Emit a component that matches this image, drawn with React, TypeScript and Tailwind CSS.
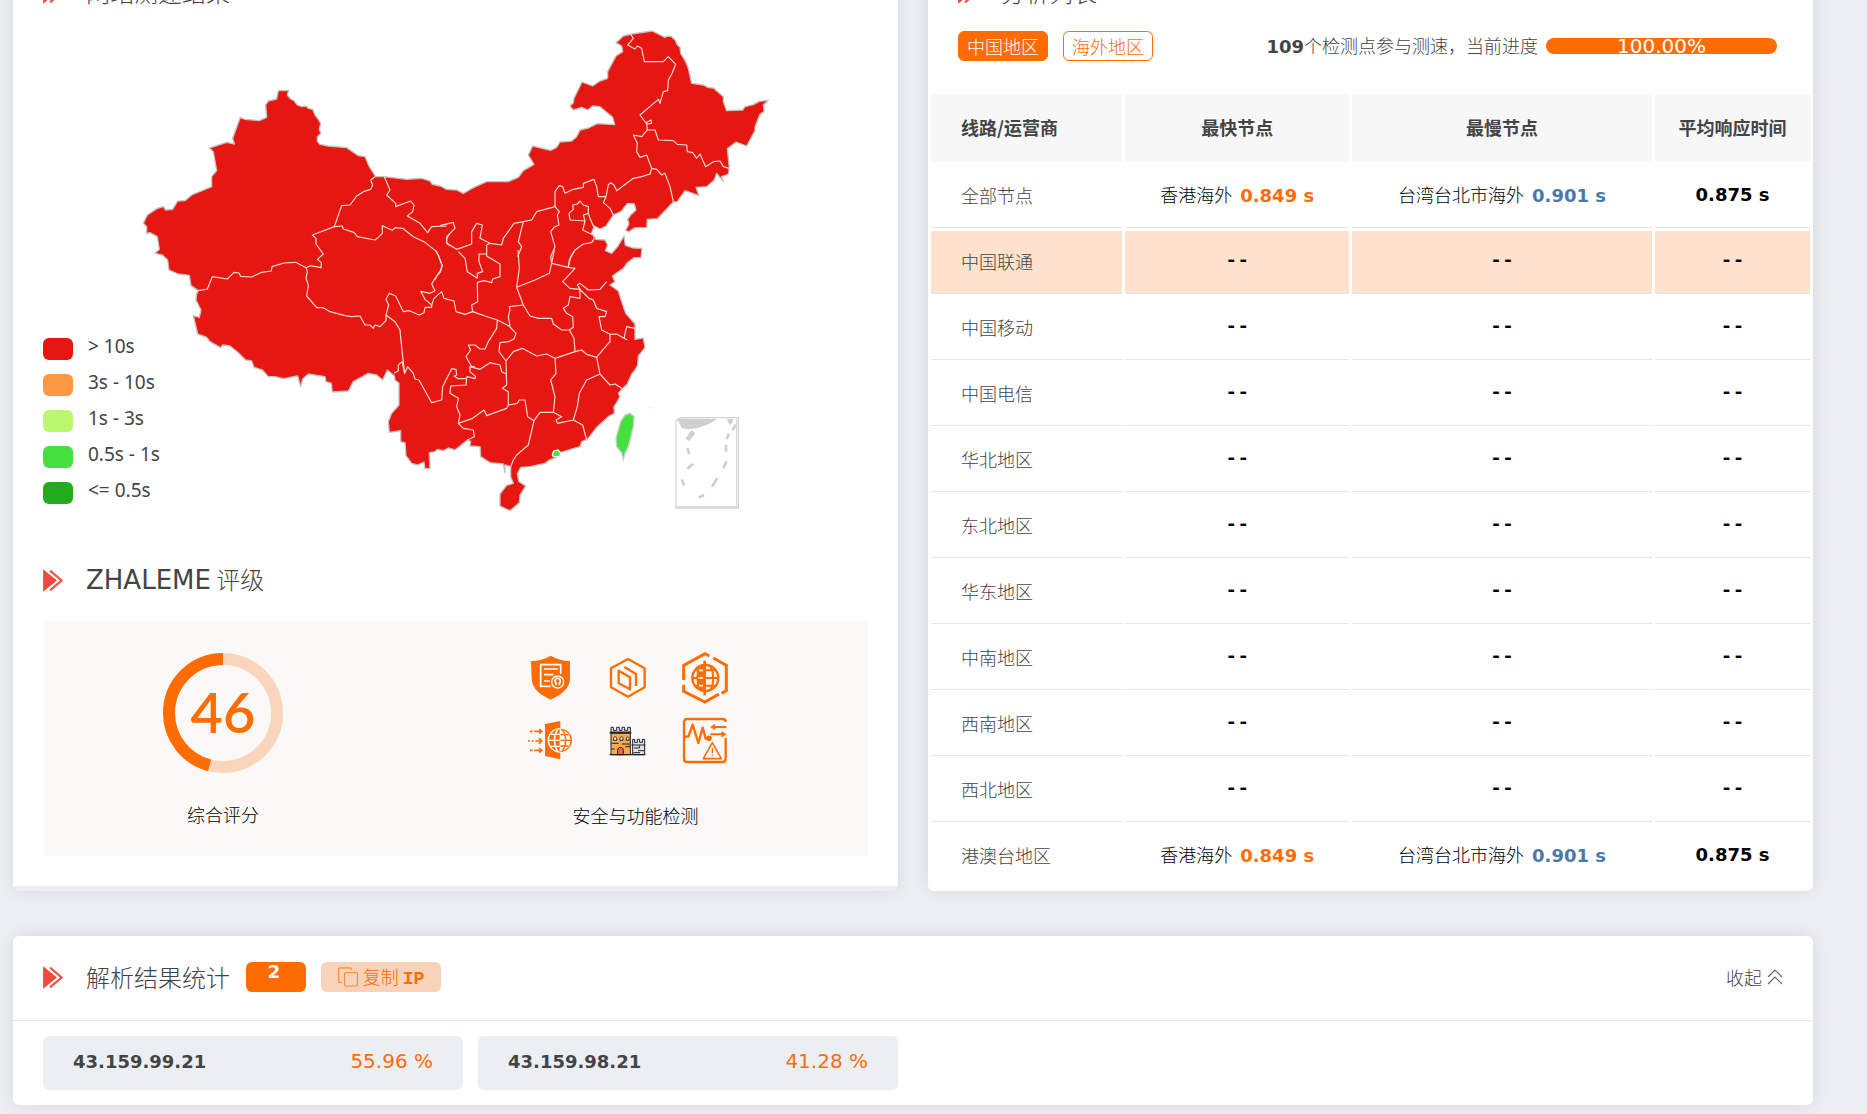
import type { ReactNode } from "react";

type SpeedNode = { name: string; time: string };

type LineRow = {
  line: string;
  fastest?: SpeedNode;
  slowest?: SpeedNode;
  average?: string;
  highlight?: boolean;
};

const offshore = {
  fastest: { name: "香港海外", time: "0.849" },
  slowest: { name: "台湾台北市海外", time: "0.901" },
  average: "0.875",
};

const rows: LineRow[] = [
  { line: "全部节点", ...offshore },
  { line: "中国联通", highlight: true },
  { line: "中国移动" },
  { line: "中国电信" },
  { line: "华北地区" },
  { line: "东北地区" },
  { line: "华东地区" },
  { line: "中南地区" },
  { line: "西南地区" },
  { line: "西北地区" },
  { line: "港澳台地区", ...offshore },
];

const legend = [
  { label: "> 10s", color: "bg-[#e61610]" },
  { label: "3s - 10s", color: "bg-[#ff9743]" },
  { label: "1s - 3s", color: "bg-[#bbf76c]" },
  { label: "0.5s - 1s", color: "bg-[#44e040]" },
  { label: "<= 0.5s", color: "bg-[#23ab1e]" },
];

const resolved = [
  { ip: "43.159.99.21", share: "55.96 %" },
  { ip: "43.159.98.21", share: "41.28 %" },
];

const num = "font-['DejaVu_Sans','Noto_Sans_CJK_SC',sans-serif] text-[20px] font-normal";
const numBold = "font-['DejaVu_Sans','Noto_Sans_CJK_SC',sans-serif] text-lg font-bold";
const dashes = "font-['Liberation_Mono',monospace] text-[20px] font-bold";

function SectionTitle({ children }: { children: ReactNode }) {
  return (
    <div className="flex h-9 items-center">
      <svg viewBox="0 0 60 70" className="mr-[23px] h-[23px] w-5 shrink-0" aria-hidden="true">
        <path d="M0 1 42 35 0 69Z" fill="#f0483e" />
        <path d="M21 5 56 35 21 65" fill="none" stroke="#ee554d" strokeWidth="7" />
      </svg>
      <h2 className="text-2xl font-light whitespace-nowrap">{children}</h2>
    </div>
  );
}

function ChinaMap() {
  return (
    <svg viewBox="129 60 2250 1500" className="h-[500px] w-[750px]" role="img" aria-label="中国">
      <path
        fill="#e61610"
        stroke="#c9c0c0"
        strokeWidth="4"
        strokeLinejoin="round"
        d="M835 272 866 272 862 285 872 297 882 302 892 315 905 320 918 318 925 325 938 328 945 345 955 358 962 370 958 388 963 400 952 410 952 424 960 433 985 438 1040 443 1075 467 1095 470 1108 500 1127 530 1152 530 1220 538 1265 535 1290 543 1297 553 1320 558 1340 568 1370 570 1390 580 1420 563 1460 545 1525 545 1555 532 1570 512 1602 493 1585 465 1598 438 1652 451 1670 442 1680 426 1715 423 1730 410 1740 390 1765 384 1792 371 1844 374 1838 352 1800 320 1778 318 1763 330 1745 322 1720 330 1710 318 1720 308 1722 295 1746 246 1778 258 1800 243 1823 235 1823 215 1848 168 1868 155 1865 138 1848 128 1870 108 1895 102 1957 93 1995 112 2002 108 2015 110 2025 120 2032 135 2040 142 2042 160 2057 185 2065 205 2070 228 2075 250 2110 255 2125 263 2140 264 2170 290 2170 305 2180 332 2228 330 2235 320 2260 314 2278 304 2305 301 2290 315 2292 335 2280 343 2265 380 2265 392 2240 438 2208 426 2182 446 2188 504 2185 522 2165 530 2170 544 2150 520 2143 540 2120 560 2088 562 2097 587 2055 572 2032 605 2020 606 1972 656 1942 658 1940 682 1905 683 1885 696 1877 690 1887 672 1883 658 1892 645 1908 630 1903 612 1882 610 1865 633 1840 645 1830 660 1818 678 1800 687 1783 678 1775 700 1788 718 1815 720 1823 735 1816 752 1835 760 1853 740 1872 708 1876 736 1900 744 1926 745 1923 773 1903 773 1882 788 1870 805 1837 828 1845 845 1830 855 1855 873 1865 905 1877 940 1905 972 1905 1018 1930 1014 1935 1042 1915 1068 1913 1095 1905 1110 1895 1122 1882 1152 1865 1168 1855 1180 1860 1190 1852 1205 1842 1220 1843 1240 1825 1250 1790 1282 1762 1318 1745 1325 1740 1340 1712 1348 1680 1358 1670 1372 1648 1380 1635 1390 1590 1400 1562 1402 1552 1422 1557 1445 1577 1458 1560 1485 1558 1508 1530 1532 1500 1518 1500 1482 1520 1456 1540 1450 1532 1430 1532 1400 1515 1395 1515 1418 1510 1392 1470 1388 1442 1370 1440 1340 1410 1338 1412 1324 1402 1320 1380 1338 1365 1350 1345 1344 1330 1352 1312 1348 1305 1355 1288 1358 1290 1406 1275 1406 1272 1386 1252 1395 1235 1390 1218 1367 1215 1328 1202 1325 1202 1292 1168 1297 1165 1265 1175 1240 1197 1215 1197 1150 1185 1140 1183 1127 1162 1110 1148 1140 1130 1125 1105 1120 1060 1145 1045 1173 997 1176 994 1150 978 1145 975 1130 925 1122 908 1137 902 1160 893 1128 850 1136 825 1130 805 1130 787 1110 762 1102 755 1083 737 1080 715 1058 690 1038 668 1035 662 1043 630 1025 620 1012 593 1002 580 947 598 952 603 930 588 900 590 882 595 872 573 857 568 826 535 822 507 810 503 780 487 765 465 760 478 748 472 710 450 698 440 700 440 680 430 670 442 645 472 625 490 620 497 630 518 628 533 603 555 602 575 585 635 560 635 530 650 512 640 455 628 444 680 427 703 432 698 415 721 352 735 358 778 362 800 352 797 315 805 303 830 297Z"
      />
      <g fill="none" stroke="#ffdcda" strokeWidth="3.5" strokeLinejoin="round">
        {/* north-west */}
        <g transform="translate(390 240)">
          <path d="M735 290 722 300 728 315 722 328 700 335 680 348 660 375 635 377 613 440 547 465 558 475 558 492 580 522 562 538 574 548 573 563 540 557 528 563" />
          <path d="M205 632 232 627 247 590 292 597 312 577 327 579 332 589 365 591 395 577 424 573 426 560 462 549 497 547 528 563 532 575 528 595 535 615 530 648 560 683 580 683 600 695 645 707 665 710 690 708 705 735 720 735 730 745 735 735 750 740 768 722 768 705" />
          <path d="M613 440 637 438 640 447 672 457 682 470 735 480 745 472 757 460 757 437 787 451 795 443 818 445 850 470 885 487 920 515 936 555 932 570 920 588 915 600" />
          <path d="M763 290 780 330 770 345 797 370 797 380 842 363 852 375 848 395 832 408 870 430 893 458 905 440 950 438" />
          <path d="M960 460 950 475 950 490 962 498" />
        </g>
        {/* north-east */}
        <g transform="translate(1320 60)">
          <path d="M572 42 580 55 563 75 585 87 592 78 605 85 613 125 670 125 685 110 707 133 697 158 685 180 683 212 670 215 660 250 655 238 600 285 620 312 635 310 633 300 620 307 622 330 645 330 655 360 700 362 712 373 740 375 742 395 758 398 770 415 780 402 797 440 820 425 840 423 850 440 868 445" />
          <path d="M622 330 605 350 580 345 592 370 590 395 600 412 620 405 635 445 650 448 665 465 675 460 690 500 700 545M635 445 630 462 605 470 580 475 530 512 522 495 512 488 505 495 498 530 490 548 510 565 520 585" />
          <path d="M498 530 475 530 470 500 462 478 430 490 430 502 400 508 375 520 368 500 358 497 345 515 345 560 290 575 275 600 250 605 222 610 190 655 185 675 150 670 120 655 127 615 110 610 95 635 95 672 50 688 20 670 20 650 45 625 40 607 0 617" />
          <path d="M345 560 358 575 352 585 357 615 342 622 332 635 345 680 332 710 335 730M250 605 235 665 245 680 233 710M385 740 388 720 405 690 430 672 455 668 463 655M140 690 140 675 150 670" />
          <path d="M420 543 412 552 398 555 400 568 387 580 390 600 435 603 428 630 455 643 463 625 450 595 445 580 430 585 435 603M445 580 445 560 430 555 420 543" />
        </g>
        {/* centre and south */}
        <g transform="translate(1140 750)">
          <path d="M165 0 175 15 187 47 182 65 165 85 155 102 165 122 150 130 122 124 135 148 155 165 155 172 135 172 132 188 118 195 88 182 70 185 47 138 28 130 18 148 26 165 18 195 45 215 60 240 62 262 68 320 74 370 83 350 100 370 105 387 117 390 155 458 185 450 188 410 215 356 228 358 230 375 222 378 235 386 258 386 262 380 285 386 287 380 270 365 270 350 300 358 330 338 360 345 365 365 378 372" />
          <path d="M74 370 66 335 55 345 55 362 42 370M155 165 162 145 185 125 192 145 222 153 228 185 255 193 278 185 315 198 352 210 387 228 408 250 402 267 385 275 360 278 357 305 378 333 380 405 367 415 385 425 385 465 412 460 418 450 435 450 443 500 462 512" />
          <path d="M278 185 275 165 293 155 292 97 312 92 335 98 338 87 360 80 360 42 320 18 320 0M320 12 297 12 297 35 308 65 292 70 292 85 262 65 255 25 235 5" />
          <path d="M352 210 350 235 325 275 315 297 300 297 285 285 265 285 272 300 258 320 275 350 285 350M260 386 258 405 212 408 210 430 235 445 230 470 240 495 235 520 278 505 312 480 320 497 380 475 385 465M235 520 250 535 280 540 283 560 262 570" />
          <path d="M414 0 418 55 410 112 430 165 388 170 390 180 385 200 390 228M410 112 465 90 508 70 515 40 565 52 585 55 548 95 570 115 600 118 627 145 640 150 650 175 680 185 675 200 657 200 665 240 690 253 710 252 732 265 740 230 765 235M732 265 742 270M515 40 523 0M565 52 572 20 585 0" />
          <path d="M430 165 450 198 475 205 515 205 520 222 545 240 568 240 582 265 585 305 525 325 500 312 470 318 427 295 400 305 378 333M568 240 580 232 578 200 560 190 550 175 565 165 570 140 600 145 600 118 592 105 600 100 625 120 660 118 680 95" />
          <path d="M585 305 605 300 620 313 650 322 672 295 690 275 690 253M650 322 660 372 690 405 705 402 725 415M660 372 620 390 598 430 592 470 580 510 532 520 528 510 545 500 520 487 480 487 462 512 445 585 410 615 400 630 392 650M525 325 528 370 512 390 525 440 520 487M580 510 608 525 620 570" />
        </g>
      </g>
      <g transform="translate(1140 750)">
        <path d="M750 490 762 500 760 530 745 590 735 610 730 628 725 608 710 590 708 565 722 515 735 495Z" fill="#44e040" stroke="#c9cfc9" strokeWidth="4" />
        <path d="M517 614 521 603 534 600 543 610 538 620 520 620Z" fill="#44e040" stroke="#fff" strokeWidth="4" />
        <circle cx="811" cy="473" r="2" fill="#ccc" />
        <path d="M888 774V512L902 503H1075V774Z" fill="none" stroke="#d2d4d6" strokeWidth="4" />
        <path d="M893 770H1070V506" fill="none" stroke="#d2d4d6" strokeWidth="3" />
        <path d="M892 506H1012C985 526 958 534 925 538L905 534Z" fill="#cfcfd2" />
        <path d="M1040 506H1058V518L1049 526Z" fill="#cfcfd2" />
        <g stroke="#cfcfd2" strokeWidth="8" fill="none">
          <path d="M922 570 940 545" strokeWidth="14" />
          <path d="M1067 524 1058 541M1047 552 1040 567M1038 585V605M1040 634 1030 654M1012 684 996 710M972 735 956 743M906 688 912 706M922 656 940 641M922 594 928 612" />
        </g>
      </g>
    </svg>
  );
}

function ScoreRing({ score }: { score: number }) {
  return (
    <svg viewBox="0 0 120 120" className="size-[120px]" role="img" aria-label={`综合评分 ${score}`}>
      <circle cx="60" cy="60" r="54" fill="none" stroke="#f9d6bb" strokeWidth="12" />
      <circle
        cx="60"
        cy="60"
        r="54"
        fill="none"
        stroke="#ff6c02"
        strokeWidth="12"
        pathLength="100"
        strokeDasharray={`${score} ${100 - score}`}
        strokeDashoffset={score - 100}
        transform="rotate(-90 60 60)"
      />
      <text x="60" y="80" textAnchor="middle" fill="#ff6c02" className="font-['Lato',sans-serif] text-[56px] font-semibold">
        {score}
      </text>
    </svg>
  );
}

const iconSize = "h-[54px] w-[52px]";

function CheckIcons() {
  return (
    <div className="mr-4 grid grid-cols-3 gap-x-[25px] gap-y-[9px]">
      {/* certificate shield */}
      <svg viewBox="75 63 156 162" className={iconSize} fill="none" stroke="#ff6c02">
        <path d="M152 77C170 88 190 92 210 93V145C210 176 182 196 152 209C122 196 95 176 95 145L93 93C115 92 135 88 152 77Z" fill="#ff6c02" stroke="none" />
        <path d="M182 132V104H122V169H152" stroke="#fff" strokeWidth="5" />
        <path d="M132 117H173M132 134H160M132 153H150" stroke="#fff" strokeWidth="5" />
        <circle cx="173" cy="156" r="18" fill="#ff6c02" stroke="#fff" strokeWidth="4" />
        <path d="M168 166V159A8 8 0 1 1 178 159V166" stroke="#fff" strokeWidth="5" />
      </svg>
      {/* hexagon box */}
      <svg viewBox="306 63 156 162" className={iconSize} fill="none" stroke="#ff6c02" strokeWidth="7" strokeLinejoin="round">
        <path d="M384 87 434 115V172L384 200 333 172V115Z" />
        <path d="M356 122 390 142V178L356 160Z" />
        <path d="M373 111 408 132V168" />
      </svg>
      {/* globe in hexagon */}
      <svg viewBox="540 63 156 162" className={iconSize} fill="none" stroke="#ff6c02" strokeWidth="9">
        <path d="M631 78 618 71 554 106V150M554 164V184L618 216 660 192M643 84 682 106V182L668 190" />
        <circle cx="619" cy="144" r="39" strokeWidth="7" />
        <path d="M617 92V196" strokeWidth="8" />
        <path d="M581 144H657M586 121H652M586 167H652" strokeWidth="6" />
        <path d="M604 108C592 132 592 157 604 181M634 108C646 132 646 157 634 181" strokeWidth="6" />
        <path d="M617 104V184L604 181C592 157 592 132 604 108Z" fill="#ff6c02" stroke="none" />
        <path d="M600 121H612M598 144H612M600 167H612" stroke="#fff" strokeWidth="5" />
      </svg>
      {/* traffic into globe */}
      <svg viewBox="75 252 156 162" className={iconSize} fill="none" stroke="#ff6c02" strokeWidth="4">
        <path d="M135 282 181 273V388L135 378Z" fill="#ff6c02" stroke="none" />
        <circle cx="180" cy="331" r="35" fill="#ff6c02" stroke="#fff" />
        <path d="M181 298A33 33 0 0 1 181 364Z" fill="#fbf9f8" />
        <path d="M147 331H213M153 313H208M153 349H208M181 298V364" stroke="#fff" />
        <path d="M173 298C160 318 160 344 173 364" stroke="#fff" />
        <path d="M181 331H213M181 314H206M181 348H206M188 300C200 318 200 344 188 362" />
        <path d="M90 304H98M103 304H124M118 297 125 304 118 311M84 333H90M95 333H101M106 333H124M117 324 125 333 117 342M90 361H98M103 361H124M118 354 125 361 118 368" strokeWidth="5" />
      </svg>
      {/* castle */}
      <svg viewBox="306 252 156 162" className={iconSize} fill="none" stroke="#20202a" strokeWidth="3">
        <path d="M333 306H391V374H333Z" fill="#fba94c" />
        <path d="M333 306V292H340V301H350V292H358V301H366V292H374V301H383V292H391V306Z" fill="#e8e8ec" />
        <path d="M329 309H394" strokeWidth="5" />
        <path d="M398 341V328H404V337H412V328H419V337H427V328H434V374H398Z" fill="#dedfe8" />
        <path d="M394 345H436M402 354H418V347M414 362H434M400 368H420" />
        <path d="M341 331V325C341 319 350 319 350 325V331ZM360 331V325C360 319 369 319 369 325V331ZM379 331V325C379 319 387 319 387 325V331Z" fill="#fff" />
        <path d="M334 340H356M366 342H390M376 350H390M335 357H344" />
        <path d="M353 374V361C353 349 370 349 370 361V374Z" fill="#f46a3c" />
        <path d="M329 374H436" strokeWidth="4" />
      </svg>
      {/* abnormal traffic */}
      <svg viewBox="540 252 156 162" className={iconSize} fill="none" stroke="#ff6c02" strokeWidth="7" strokeLinejoin="round">
        <path d="M680 276C680 270 676 267 670 267H565C559 267 555 271 555 277V386C555 392 559 396 565 396H670C676 396 680 392 680 386V324" />
        <path d="M557 320H568L581 284 598 339 611 293 620 326 628 324" />
        <circle cx="630" cy="325" r="5" fill="#ff6c02" />
        <path d="M682 291H642M634 313H674" strokeWidth="6" />
        <path d="M648 282 634 291 648 300ZM668 304 682 313 668 322Z" fill="#ff6c02" strokeWidth="1" />
        <path d="M640 338 667 386H613Z" strokeWidth="5" />
        <path d="M640 353V370M640 374V379" strokeWidth="4" />
      </svg>
    </div>
  );
}

function NodeCell({ node, color }: { node?: SpeedNode; color: string }) {
  if (!node) return <span className={dashes}>--</span>;
  return (
    <>
      {node.name}
      <span className={`ml-2 ${numBold} ${color}`}>{node.time} s</span>
    </>
  );
}

export default function App() {
  const shadow = "shadow-[0_0_18px_rgba(0,0,0,0.09)]";

  return (
    <div className="min-h-screen overflow-hidden bg-[#ebeef3] font-['Noto_Sans_CJK_SC',sans-serif] text-lg font-light text-[#444]">
      <main className="-mt-10 mr-[54px] mb-2 ml-[13px] flex flex-col gap-[45px]">
        <div className="grid grid-cols-2 gap-[30px]">
          <div className={`rounded-md bg-[#ebeef3] ${shadow}`}>
            <section className="bg-white px-[30px] pt-[14px] pb-[30px]">
              <SectionTitle>网站测速结果</SectionTitle>

              <div className="relative mt-[10px]">
                <ChinaMap />
                <ul className="absolute bottom-[15px] left-0 flex flex-col gap-3 font-['Noto_Sans',sans-serif] text-[19px] font-normal">
                  {legend.map((item) => (
                    <li key={item.label} className="flex h-6 items-center gap-[15px]">
                      <span className={`h-[22px] w-[30px] rounded-md ${item.color}`} />
                      <span className="-mt-1">{item.label}</span>
                    </li>
                  ))}
                </ul>
              </div>

              <div className="mt-[42px]">
                <SectionTitle>
                  <span className="font-['DejaVu_Sans',sans-serif] text-[26px] font-normal">ZHALEME</span> 评级
                </SectionTitle>
              </div>

              <div className="mt-[23px] grid grid-cols-[24fr_31fr] bg-[#fbf9f8] pt-[30px] pb-[27px] text-black">
                <div className="flex flex-col items-center pt-[2px]">
                  <ScoreRing score={46} />
                  <p className="mt-[27px]">综合评分</p>
                </div>
                <div className="flex flex-col items-center">
                  <CheckIcons />
                  <p className="mt-[33px]">安全与功能检测</p>
                </div>
              </div>
            </section>
          </div>

          <section className={`rounded-md bg-white pt-[14px] ${shadow}`}>
            <div className="px-[30px]">
              <SectionTitle>分析列表</SectionTitle>
            </div>

            <div className="mt-[21px] mb-[30px] flex h-[30px] items-center justify-between pr-9 pl-[30px]">
              <div className="flex gap-[15px]">
                <button type="button" className="h-[30px] rounded-md border border-[#ff6c02] bg-[#ff6c02] px-2 leading-7 text-white">
                  中国地区
                </button>
                <button type="button" className="h-[30px] rounded-md border border-[#ff6c02] px-2 leading-7 text-[#ff6c02]">
                  海外地区
                </button>
              </div>
              <div className="flex items-center gap-2">
                <span className="whitespace-nowrap">
                  <span className={numBold}>109</span>个检测点参与测速，当前进度
                </span>
                <div className="h-4 w-[231px] rounded-full bg-[#ff6c02] text-center text-white">
                  <span className={`block leading-4 ${num}`}>100.00%</span>
                </div>
              </div>
            </div>

            <table className="w-full table-fixed border-separate border-spacing-[3px] text-center text-black">
              <colgroup>
                <col className="w-[22%]" />
                <col className="w-[25.7%]" />
                <col className="w-[34.5%]" />
                <col />
              </colgroup>
              <thead>
                <tr className="h-[68px] text-[#444] *:bg-[#f7f7f7] *:pb-[3px]">
                  <th className="pl-[30px] text-left">线路/运营商</th>
                  <th>最快节点</th>
                  <th>最慢节点</th>
                  <th>平均响应时间</th>
                </tr>
              </thead>
              <tbody>
                {rows.map((row) => (
                  <tr
                    key={row.line}
                    className={`h-[63px] *:border-b *:border-[#e6e6e6] *:pb-[3px] last:*:border-transparent ${
                      row.highlight ? "*:bg-[#fee2ce]" : ""
                    }`}
                  >
                    <td className="pl-[30px] text-left text-[#444]">{row.line}</td>
                    <td>
                      <NodeCell node={row.fastest} color="text-[#ff6c02]" />
                    </td>
                    <td>
                      <NodeCell node={row.slowest} color="text-[#4a78ae]" />
                    </td>
                    <td className={row.average ? numBold : dashes}>{row.average ? `${row.average} s` : "--"}</td>
                  </tr>
                ))}
              </tbody>
            </table>
          </section>
        </div>

        <section className={`rounded-md bg-white ${shadow}`}>
          <header className="flex h-[85px] items-center border-b border-[#e6e6e6] px-[30px] pb-[2px]">
            <SectionTitle>解析结果统计</SectionTitle>
            <span className={`ml-4 h-[30px] w-[60px] rounded-md bg-[#ff6c02] pr-1 text-center leading-5 text-white ${numBold}`}>
              2
            </span>
            <button
              type="button"
              className="ml-[15px] flex h-[30px] w-[120px] items-center justify-center gap-[5px] rounded-md bg-[#f8d3b9] text-[#ff6c02]"
            >
              <svg viewBox="0 0 20 20" className="size-5" fill="none" stroke="#ff8a38" strokeWidth="1.2" aria-hidden="true">
                <rect x="6.5" y="5.5" width="13" height="13.5" rx="1.5" />
                <path d="M4 15.5H2C1.2 15.5 .7 15 .7 14.2V2.2C.7 1.4 1.2 .9 2 .9H12C13 .9 13.5 1.4 13.5 2.2V3" />
              </svg>
              <span className="whitespace-nowrap">
                复制 <span className="font-['Liberation_Mono',monospace] font-bold">IP</span>
              </span>
            </button>
            <button type="button" className="ml-auto flex items-center gap-[5px]">
              收起
              <svg viewBox="0 0 16 16" className="size-4" fill="none" stroke="#666" strokeWidth="1.2" aria-hidden="true">
                <path d="M1 8 8 1 15 8M1 15 8 8 15 15" />
              </svg>
            </button>
          </header>
          <ul className="grid grid-cols-4 gap-[15px] py-[15px] pr-[45px] pl-[30px]">
            {resolved.map((item) => (
              <li
                key={item.ip}
                className="flex h-[54px] items-center justify-between rounded-md bg-[#ebeff4] px-[30px] pb-[3px]"
              >
                <span className={numBold}>{item.ip}</span>
                <span className={`${num} text-[#ff6c02]`}>{item.share}</span>
              </li>
            ))}
          </ul>
        </section>
      </main>
    </div>
  );
}
